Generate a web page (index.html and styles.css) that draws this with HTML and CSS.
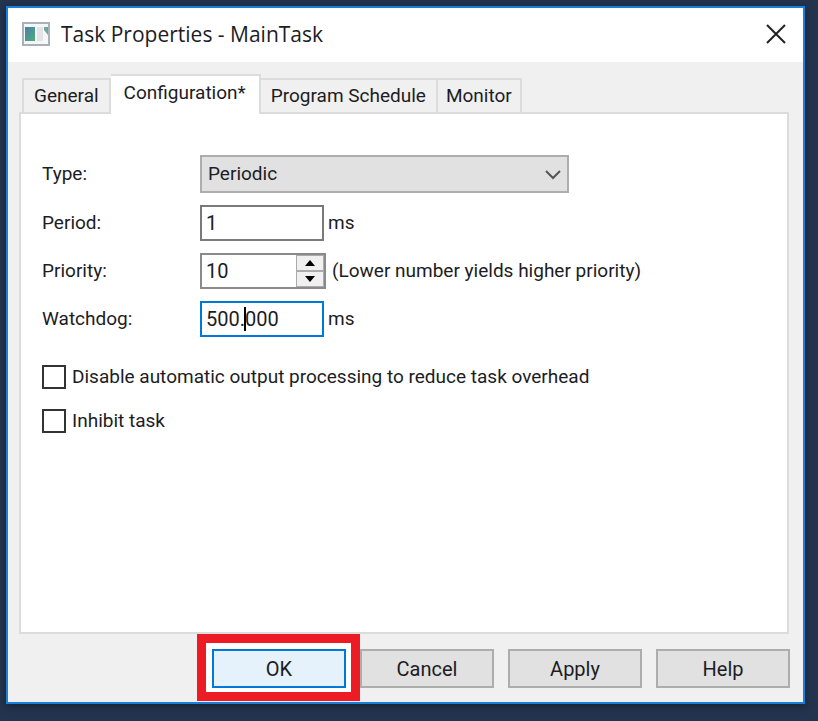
FILE: index.html
```html
<!DOCTYPE html>
<html lang="en">
<head>
    <meta charset="UTF-8">
    <meta name="viewport" content="width=device-width, initial-scale=1.0">
    <title>Task Properties - MainTask</title>
    <link rel="stylesheet" href="styles.css">
</head>
<body>
    <form class="dialog">
        <header class="titlebar">
            <svg class="app-icon" width="28" height="24" viewBox="0 0 28 24">
                <defs>
                    <linearGradient id="pane" x1="0" y1="0" x2="1" y2="1">
                        <stop offset="0" stop-color="#4a7fae"/>
                        <stop offset="1" stop-color="#4fae78"/>
                    </linearGradient>
                </defs>
                <rect x="1" y="1" width="26" height="22" fill="#f4f6f7" stroke="#a9b0b6" stroke-width="2"/>
                <rect x="3" y="5" width="10" height="14" fill="url(#pane)"/>
                <rect x="15" y="5" width="6" height="14" fill="#e4e4e6"/>
                <path d="M22 5h4v8l-4-5z" fill="#6da79f"/>
            </svg>
            <h1>Task Properties - MainTask</h1>
            <button type="button" class="close" aria-label="Close">
                <svg width="20" height="20" viewBox="0 0 20 20">
                    <path d="M1 1l18 18M19 1L1 19" fill="none" stroke="#222" stroke-width="2"/>
                </svg>
            </button>
        </header>

        <div class="tabs" role="tablist">
            <button type="button" role="tab" class="tab">General</button>
            <button type="button" role="tab" class="tab active" aria-selected="true">Configuration*</button>
            <button type="button" role="tab" class="tab">Program Schedule</button>
            <button type="button" role="tab" class="tab">Monitor</button>
        </div>

        <div class="panel" role="tabpanel">
            <div class="fields">
                <label for="type">Type:</label>
                <div class="field select">
                    <select id="type">
                        <option>Periodic</option>
                        <option>Continuous</option>
                        <option>Event</option>
                    </select>
                    <svg class="chevron" width="16" height="10" viewBox="0 0 16 10">
                        <path d="M1 1l7 7 7-7" fill="none" stroke="#555" stroke-width="2"/>
                    </svg>
                </div>

                <label for="period">Period:</label>
                <div class="field">
                    <input type="text" id="period" class="text" value="1">
                    <span>ms</span>
                </div>

                <label for="priority">Priority:</label>
                <div class="field">
                    <div class="spinner">
                        <input type="number" id="priority" value="10" min="1" max="15">
                        <div class="steps">
                            <button type="button" aria-label="Increase">
                                <svg width="12" height="6" viewBox="0 0 12 6"><path d="M1 6l5-6 5 6z"/></svg>
                            </button>
                            <button type="button" aria-label="Decrease">
                                <svg width="12" height="6" viewBox="0 0 12 6"><path d="M1 0l5 6 5-6z"/></svg>
                            </button>
                        </div>
                    </div>
                    <span>(Lower number yields higher priority)</span>
                </div>

                <label for="watchdog">Watchdog:</label>
                <div class="field editing">
                    <input type="text" id="watchdog" class="text" value="500.000">
                    <i class="caret"></i>
                    <span>ms</span>
                </div>
            </div>

            <div class="checks">
                <label><input type="checkbox"> Disable automatic output processing to reduce task overhead</label>
                <label><input type="checkbox"> Inhibit task</label>
            </div>
        </div>

        <footer class="actions">
            <div class="highlight"><button type="submit" class="default">OK</button></div>
            <button type="button">Cancel</button>
            <button type="button">Apply</button>
            <button type="button">Help</button>
        </footer>
    </form>
</body>
</html>
```

FILE: styles.css
```css
* {
    box-sizing: border-box;
}
body {
    margin: 0;
    padding: 6px 13px 17px 6px;
    min-height: 100vh;
    display: flex;
    background-color: #24344f;
    font-family: Roboto, "Liberation Sans", sans-serif;
    font-size: 19px;
    line-height: 26px;
    color: #1c1c24;
}
button, input, select {
    font: inherit;
    color: inherit;
    margin: 0;
    padding: 0;
    border-radius: 0;
    outline: none;
}
svg {
    display: block;
}
.dialog {
    flex: 1;
    display: flex;
    flex-direction: column;
    background-color: #f0f0f0;
    border: 2px solid #1a7fd8;
    box-shadow: 0 2px 8px rgba(0, 0, 0, 0.4);
}
.titlebar {
    display: flex;
    align-items: center;
    height: 54px;
    padding: 0 17px 3px 14px;
    background-color: #fff;
}
.titlebar h1 {
    flex: 1;
    margin: 0 0 0 11px;
    font-family: "Open Sans", "Noto Sans", sans-serif;
    font-size: 21px;
    font-weight: 400;
}
.close {
    border: none;
    background: none;
}
.tabs {
    display: flex;
    align-items: flex-end;
    margin-top: 12px;
    padding: 0 14px;
}
.tab {
    height: 34px;
    padding: 0 10px;
    border: 2px solid #dcdcdc;
    border-left-width: 0;
    border-bottom: none;
    background-color: #f0f0f0;
    white-space: nowrap;
}
.tab:first-child {
    border-left-width: 2px;
}
.tab:last-child {
    padding: 0 8px;
}
.tab.active {
    position: relative;
    height: 40px;
    margin-bottom: -2px;
    padding: 0 13px 4px;
    background-color: #fff;
}
.panel {
    flex: 1;
    margin: 0 14px 0 11px;
    padding: 41px 21px;
    border: 2px solid #dcdcdc;
    background-color: #fff;
}
.fields {
    display: grid;
    grid-template-columns: 158px 1fr;
    row-gap: 12px;
    align-items: center;
}
.field {
    position: relative;
    display: flex;
    align-items: center;
    gap: 4px;
}
.select {
    max-width: 369px;
}
.select select {
    appearance: none;
    width: 100%;
    height: 38px;
    padding: 0 6px;
    border: 2px solid #adadad;
    background-color: #e1e1e1;
}
.chevron {
    position: absolute;
    right: 8px;
    top: 15px;
    pointer-events: none;
}
.text {
    width: 124px;
    height: 36px;
    padding: 0 4px;
    border: 2px solid #7a7a7a;
    background-color: #fff;
    font-size: 20px;
}
.editing .text {
    border-color: #0078d7;
}
.caret {
    position: absolute;
    left: 44px;
    top: 6px;
    width: 2px;
    height: 24px;
    background-color: #000;
}
.spinner {
    display: flex;
    width: 126px;
    height: 36px;
    border: 2px solid #8a8a8e;
    margin-right: 2px;
}
.spinner input {
    flex: 1;
    min-width: 0;
    padding: 0 4px;
    border: none;
    background-color: #fff;
    font-size: 20px;
    appearance: textfield;
}
.spinner input::-webkit-inner-spin-button {
    appearance: none;
}
.steps {
    display: flex;
    flex-direction: column;
    width: 28px;
}
.steps button {
    flex: 1;
    display: flex;
    align-items: center;
    justify-content: center;
    border: 1px solid #ababab;
    background-color: #f0f0f0;
}
.checks {
    display: flex;
    flex-direction: column;
    gap: 18px;
    margin-top: 27px;
}
.checks label {
    display: flex;
    align-items: center;
    gap: 6px;
}
.checks input {
    appearance: none;
    flex: none;
    width: 24px;
    height: 24px;
    border: 2px solid #333;
    background-color: #fff;
}
.actions {
    display: flex;
    justify-content: flex-end;
    gap: 14px;
    padding: 15px 13px 14px;
}
.actions button {
    width: 134px;
    height: 39px;
    border: 2px solid #adadad;
    background-color: #e1e1e1;
    font-size: 20px;
}
.highlight {
    position: relative;
}
.highlight::before {
    content: "";
    position: absolute;
    inset: -15px -14px -13px -15px;
    border: 9px solid #ed1c24;
    background-color: #fff;
}
.actions .default {
    position: relative;
    border-color: #0078d7;
    background-color: #e5f1fb;
}
```
